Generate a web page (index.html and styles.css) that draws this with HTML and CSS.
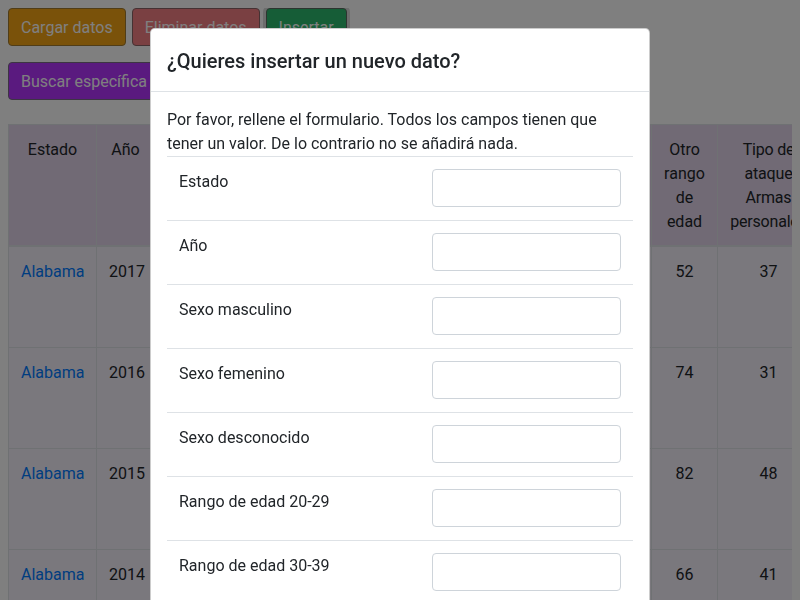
FILE: index.html
```html
<!DOCTYPE html>
<html lang="es">
<head>
<meta charset="utf-8">
<title>Datos</title>
<link rel="stylesheet" href="styles.css">
</head>
<body class="modal-open">
<div class="toolbar">
  <div class="btn-row">
    <button class="btn btn-load">Cargar datos</button>
    <button class="btn btn-delete">Eliminar datos</button>
    <button class="btn btn-insert focus">Insertar</button>
  </div>
  <div class="btn-row">
    <button class="btn btn-search">Buscar específica</button>
  </div>
</div>

<table class="data">
  <thead>
    <tr>
      <th class="c-state">Estado</th>
      <th class="c-year">Año</th>
      <th class="c-male">Sexo masculino</th>
      <th class="c-female">Sexo femenino</th>
      <th class="c-unk">Sexo desconocido</th>
      <th class="c-age">Rango de edad 20-29</th>
      <th class="c-age">Rango de edad 30-39</th>
      <th class="c-age2">Rango de edad 40-49</th>
      <th class="c-other">Otro rango de edad</th>
      <th class="c-weap">Tipo de ataque Armas personales</th>
      <th class="c-more">Tipo de ataque Cuchillos</th>
      <th class="c-more">Tipo de ataque Otros</th>
    </tr>
  </thead>
  <tbody>
    <tr><td><a href="#">Alabama</a></td><td>2017</td><td>212</td><td>84</td><td>3</td><td>71</td><td>63</td><td>55</td><td>52</td><td>37</td><td>201</td><td>61</td></tr>
    <tr><td><a href="#">Alabama</a></td><td>2016</td><td>198</td><td>79</td><td>5</td><td>68</td><td>59</td><td>57</td><td>74</td><td>31</td><td>189</td><td>62</td></tr>
    <tr><td><a href="#">Alabama</a></td><td>2015</td><td>187</td><td>72</td><td>2</td><td>60</td><td>55</td><td>64</td><td>82</td><td>48</td><td>166</td><td>47</td></tr>
    <tr><td><a href="#">Alabama</a></td><td>2014</td><td>176</td><td>70</td><td>4</td><td>58</td><td>61</td><td>65</td><td>66</td><td>41</td><td>160</td><td>49</td></tr>
  </tbody>
</table>

<div class="modal-backdrop"></div>
<div class="modal">
  <div class="modal-dialog">
    <div class="modal-content">
      <div class="modal-header">
        <h5 class="modal-title">¿Quieres insertar un nuevo dato?</h5>
      </div>
      <div class="modal-body">
        <p class="intro">Por favor, rellene el formulario. Todos los campos tienen que tener un valor. De lo contrario no se añadirá nada.</p>
        <table class="form-table">
          <tr><td class="lbl">Estado</td><td class="fld"><input class="form-control" type="text"></td></tr>
          <tr><td class="lbl">Año</td><td class="fld"><input class="form-control" type="text"></td></tr>
          <tr><td class="lbl">Sexo masculino</td><td class="fld"><input class="form-control" type="text"></td></tr>
          <tr><td class="lbl">Sexo femenino</td><td class="fld"><input class="form-control" type="text"></td></tr>
          <tr><td class="lbl">Sexo desconocido</td><td class="fld"><input class="form-control" type="text"></td></tr>
          <tr><td class="lbl">Rango de edad 20-29</td><td class="fld"><input class="form-control" type="text"></td></tr>
          <tr><td class="lbl">Rango de edad 30-39</td><td class="fld"><input class="form-control" type="text"></td></tr>
          <tr><td class="lbl">Rango de edad 40-49</td><td class="fld"><input class="form-control" type="text"></td></tr>
          <tr><td class="lbl">Otro rango de edad</td><td class="fld"><input class="form-control" type="text"></td></tr>
        </table>
      </div>
    </div>
  </div>
</div>
</body>
</html>
```
FILE: styles.css
```css
* { box-sizing: border-box; }
html, body { height: 100%; }
body {
  margin: 8px;
  font-family: Roboto, "Liberation Sans", Arial, sans-serif;
  font-size: 16px;
  line-height: 1.5;
  color: #212529;
  background: #fff;
}
.modal-open { overflow: hidden; }

.toolbar { display: flex; flex-direction: column; gap: 16px; margin-bottom: 24px; }
.btn-row { display: flex; gap: 6px; }
.btn {
  font: inherit;
  line-height: 1.5;
  padding: 7px 12px 5px;
  border: 1px solid #6c757d;
  border-radius: 4px;
  color: #fff;
  cursor: pointer;
}
.btn-load { background: #f5a414; border-color: #a07a30; }
.btn-delete { background: #f48084; border-color: #8a6466; }
.btn-insert { background: #2dbb6e; border-color: #5a6a60; }
.btn-insert.focus { box-shadow: 0 0 0 3px rgba(0,0,0,0.15); }
.btn-search { background: #b534ff; border-color: #7a6a86; }

.data {
  table-layout: fixed;
  width: 1011px;
  border-collapse: collapse;
  border: 1px solid #dee2e6;
  text-align: center;
}
.data th, .data td {
  padding: 13px 12px 11px;
  border: 1px solid #dee2e6;
  vertical-align: top;
  font-weight: 400;
}
.data thead th { background: #e2d4ea; border-bottom-width: 2px; }
.data tbody td { background: #f4f0fb; height: 101px; }
.data a { color: #007bff; text-decoration: none; }
.c-state { width: 88px; }
.c-year { width: 58px; }
.c-male { width: 94px; }
.c-female { width: 88px; }
.c-unk { width: 110px; }
.c-age { width: 68px; }
.c-age2 { width: 69px; }
.c-other { width: 66px; }
.c-weap { width: 102px; letter-spacing: -0.2px; }
.c-more { width: 100px; }

.modal-backdrop {
  position: fixed;
  inset: 0;
  background: rgba(0,0,0,0.5);
}
.modal {
  position: fixed;
  inset: 0;
  overflow: hidden;
}
.modal-dialog {
  max-width: 500px;
  margin: 28px auto;
}
.modal-content {
  background: #fff;
  border: 1px solid rgba(0,0,0,0.2);
  border-radius: 4.8px;
}
.modal-header {
  padding: 17px 16px 15px;
  border-bottom: 1px solid #dee2e6;
}
.modal-title {
  margin: 0;
  font-size: 20px;
  font-weight: 500;
  line-height: 1.5;
}
.modal-body { padding: 16px; }
.intro { margin: 0; }
.form-table { width: 100%; border-collapse: collapse; }
.form-table td {
  border-top: 1px solid #dee2e6;
  padding: 12px 12px 13px;
  vertical-align: top;
}
.form-table .lbl { width: 253px; padding-top: 13px; padding-bottom: 12px; }
.form-control {
  display: block;
  width: 100%;
  height: 38px;
  padding: 6px 12px;
  font: inherit;
  color: #495057;
  background: #fff;
  border: 1px solid #ced4da;
  border-radius: 4px;
}
```
